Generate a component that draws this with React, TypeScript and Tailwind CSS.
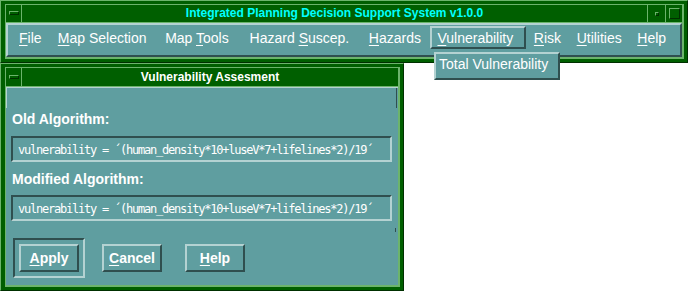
import React from "react";

const menu: { label: string; u: number; w: string }[] = [
  { label: "File", u: 0, w: "w-[39px]" },
  { label: "Map Selection", u: 0, w: "w-[108px]" },
  { label: "Map Tools", u: 4, w: "w-[85px]" },
  { label: "Hazard Suscep.", u: 7, w: "w-[120px]" },
  { label: "Hazards", u: 0, w: "w-[69px]" },
  { label: "Vulnerability", u: 0, w: "w-[96px]" },
  { label: "Risk", u: 0, w: "w-[43px]" },
  { label: "Utilities", u: 0, w: "w-[61px]" },
  { label: "Help", u: 0, w: "w-[50px]" },
];

function Mn({ text, u }: { text: string; u: number }) {
  return (
    <>
      {text.slice(0, u)}
      <span className="underline underline-offset-[2px] decoration-1">{text[u]}</span>
      {text.slice(u + 1)}
    </>
  );
}

const sans = "font-['Liberation_Sans',Arial,sans-serif]";

function TextBox() {
  return (
    <div className="w-[381px] h-[26px] border-2 border-t-[#2f4f4f] border-l-[#2f4f4f] border-b-[#b4d2d2] border-r-[#b4d2d2] pl-[5px] flex items-center">
      <span className="font-['DejaVu_Sans_Mono',monospace] text-[12px] tracking-[-1.22px] text-white whitespace-pre leading-[14px] mt-[1px]">
        vulnerability = ´(human_density*10+luseV*7+lifelines*2)/19´
      </span>
    </div>
  );
}

function Btn({ text, u }: { text: string; u: number }) {
  return (
    <div className="w-[60px] h-[28px] border-2 border-t-[#b4d2d2] border-l-[#b4d2d2] border-b-[#2f4f4f] border-r-[#2f4f4f] flex items-center justify-center font-bold text-[14px] text-white leading-[16px]">
      <span>
        <Mn text={text} u={u} />
      </span>
    </div>
  );
}

export default function App() {
  return (
    <div className={`relative w-[688px] h-[291px] bg-white overflow-hidden ${sans}`}>
      {/* Main window */}
      <div className="w-[688px] h-[63px] bg-[#005f00] border border-t-[#6cb46c] border-l-[#6cb46c] border-b-[#003000] border-r-[#003000] pt-[3px] pl-[4px] pr-[3px] pb-[3px]">
        <div className="h-full border-l border-t border-[#6cb46c] border-r-2 border-b-2 flex flex-col">
          {/* title row */}
          <div className="h-[18px] border-b border-[#6cb46c] flex">
            <div className="w-[16px] h-full border-r border-[#6cb46c] flex items-center justify-center">
              <div className="w-[10px] h-[4px] border border-t-[#6cb46c] border-l-[#6cb46c] border-b-[#003000] border-r-[#003000] bg-[#005f00] -translate-y-[1px]" />
            </div>
            <div className="flex-1 flex items-center justify-center text-[#00ffff] font-bold text-[12px] leading-[17px]">
              Integrated Planning Decision Support System v1.0.0
            </div>
            <div className="w-[18px] h-full border-l border-[#6cb46c] flex items-center justify-center">
              <div className="w-[4px] h-[4px] border border-t-[#6cb46c] border-l-[#6cb46c] border-b-[#003000] border-r-[#003000]" />
            </div>
            <div className="w-[17px] h-full border-l border-[#6cb46c] flex items-center justify-center">
              <div className="w-[11px] h-[11px] border border-t-[#6cb46c] border-l-[#6cb46c] border-b-[#003000] border-r-[#003000]" />
            </div>
          </div>
          {/* menubar */}
          <div className="h-[34px] bg-[#5f9ea0] border-2 border-t-[#b4d2d2] border-l-[#b4d2d2] border-b-[#2f4f4f] border-r-[#2f4f4f] flex pt-[1px] pl-[4px]">
            {menu.map((m) => (
              <div
                key={m.label}
                className={`${m.w} h-[23px] border-2 pl-[5px] pt-[2px] text-[14px] leading-[16px] text-white whitespace-nowrap ${
                  m.label === "Vulnerability"
                    ? "border-t-[#b4d2d2] border-l-[#b4d2d2] border-b-[#2f4f4f] border-r-[#2f4f4f] mr-[1px] w-[95px]"
                    : "border-transparent"
                }`}
              >
                <Mn text={m.label} u={m.u} />
              </div>
            ))}
          </div>
        </div>
      </div>

      {/* Dialog */}
      <div className="w-[404px] h-[228px] bg-[#005f00] border border-t-[#6cb46c] border-l-[#6cb46c] border-b-[#003000] border-r-[#003000] pt-[3px] pl-[4px] pr-[3px] pb-[3px]">
        <div className="h-full border-l border-t border-[#6cb46c] border-r-2 border-b-2 flex flex-col">
          <div className="h-[19px] border-b border-[#6cb46c] flex">
            <div className="w-[16px] h-full border-r border-[#6cb46c] flex items-center justify-center">
              <div className="w-[10px] h-[4px] border border-t-[#6cb46c] border-l-[#6cb46c] border-b-[#003000] border-r-[#003000] bg-[#005f00]" />
            </div>
            <div className="flex-1 flex items-center justify-center text-white font-bold text-[12px] leading-[18px]">
              Vulnerability Assesment
            </div>
          </div>
          <div className="relative flex-1 bg-[#5f9ea0] border-t border-[#b4d2d2] flex flex-col pl-[5px] text-white">
            <div className="absolute left-0 top-0 w-[1px] h-[20px] bg-[#b4d2d2]" />
            <div className="absolute right-[1px] top-0 w-[1px] h-[20px] bg-[#2f4f4f]" />
            <div className="absolute right-[2px] top-[140px] w-[1px] h-[4px] bg-[#2f4f4f]" />
            <div className="mt-[23px] ml-[1px] h-[16px] font-bold text-[14px] leading-[16px]">Old Algorithm:</div>
            <div className="mt-[9px]">
              <TextBox />
            </div>
            <div className="mt-[9px] ml-[1px] h-[16px] font-bold text-[14px] leading-[16px]">Modified Algorithm:</div>
            <div className="mt-[8px]">
              <TextBox />
            </div>
            <div className="mt-[17px] ml-[2px] flex items-start">
              <div className="w-[72px] h-[40px] border-2 border-t-[#2f4f4f] border-l-[#2f4f4f] border-b-[#b4d2d2] border-r-[#b4d2d2] p-[4px]">
                <Btn text="Apply" u={0} />
              </div>
              <div className="ml-[17px] mt-[6px]">
                <Btn text="Cancel" u={0} />
              </div>
              <div className="ml-[23px] mt-[6px]">
                <Btn text="Help" u={0} />
              </div>
            </div>
          </div>
        </div>
      </div>

      {/* Dropdown menu */}
      <div className="absolute left-[434px] top-[52px] w-[126px] h-[28px] bg-[#5f9ea0] border-2 border-t-[#b4d2d2] border-l-[#b4d2d2] border-b-[#2f4f4f] border-r-[#2f4f4f] pl-[3px] pt-[2px] text-white text-[14px] leading-[16px] whitespace-nowrap">
        Total Vulnerability
      </div>
    </div>
  );
}
